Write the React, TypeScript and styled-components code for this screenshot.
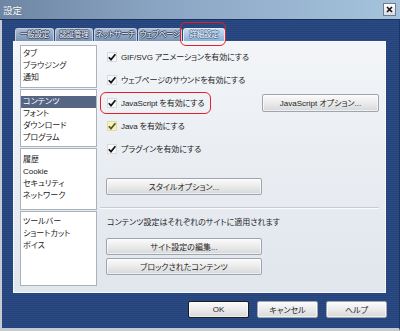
import React from 'react';
import styled, { createGlobalStyle, css } from 'styled-components';

const GlobalStyle = createGlobalStyle`
  html, body {
    margin: 0;
    padding: 0;
  }
  body {
    width: 400px;
    height: 331px;
    overflow: hidden;
    background: #284880;
    font-family: "Liberation Sans", "Noto Sans CJK JP", sans-serif;
    font-size: 8px;
    font-feature-settings: "palt";
    color: #1e1e1e;
  }
`;

const Window = styled.div`
  width: 400px;
  height: 331px;
  display: flex;
  flex-direction: column;
`;

const TitleBar = styled.div`
  height: 19px;
  flex: none;
  display: flex;
  align-items: center;
  justify-content: space-between;
  padding: 0 4px 0 3px;
  border-bottom: 1px solid #1a2f58;
  background: linear-gradient(90deg, #6e86a4 0%, #8aa5c3 40%, #a6c3dd 100%);
`;

const Title = styled.span`
  color: #fff;
  font-size: 9.5px;
  text-shadow: 0 0 1px #3a4d68;
`;

const CloseBox = styled.div`
  width: 11px;
  height: 11px;
  display: flex;
  align-items: center;
  justify-content: center;
  border: 1px solid #6f7c8c;
  background: linear-gradient(#ffffff, #d8dde3);
`;

const Body = styled.div`
  flex: 1;
  display: flex;
  flex-direction: column;
  padding: 8px 13px 0 11px;
  border-left: 2px solid #c6cbd3;
  border-bottom: 3px solid #c6cbd3;
  border-right: 1px solid #1c3562;
  background: repeating-linear-gradient(180deg, #2b4b84 0, #2b4b84 1px, #25437a 1px, #25437a 2px);
`;

const TabStrip = styled.div`
  display: flex;
  gap: 1px;
  padding-left: 2px;
  height: 13px;
  position: relative;
  z-index: 1;
`;

const Tab = styled.div<{ $active?: boolean; $width: number }>`
  position: relative;
  box-sizing: border-box;
  width: ${({ $width }) => $width}px;
  height: 13px;
  border: 1px solid #c3cfdd;
  border-bottom: none;
  border-radius: 3px 3px 0 0;
  background: linear-gradient(#a9bbd1, #7b93b3);
  color: #fff;
  font-size: 7.5px;
  letter-spacing: -0.2px;
  line-height: 12px;
  text-align: center;
  white-space: nowrap;
  text-shadow: 1px 0 0 #2b3d5c, -1px 0 0 #2b3d5c, 0 1px 0 #2b3d5c, 0 -1px 0 #2b3d5c;

  ${({ $active }) =>
    $active &&
    css`
      background: linear-gradient(#c4dbf1, #8db2d8);
      border-color: #e6eef7;
      text-shadow: 1px 0 0 #4a6c96, -1px 0 0 #4a6c96, 0 1px 0 #4a6c96, 0 -1px 0 #4a6c96;

      &::after {
        content: '';
        position: absolute;
        left: -4px;
        right: -2px;
        top: -7px;
        bottom: -5px;
        border: 1.5px solid #e3202b;
        border-radius: 6px;
      }
    `}
`;

const Panel = styled.div`
  height: 252px;
  box-sizing: border-box;
  display: flex;
  padding: 3px 0 6px 6px;
  border: 1px solid #f7f8fa;
  background: linear-gradient(180deg, #f3f5f8 0%, #e9edf2 50%, #e1e6ed 100%);
`;

const SideList = styled.div`
  width: 77px;
  flex: none;
  display: flex;
  flex-direction: column;
  gap: 1px;
`;

const Group = styled.div<{ $height?: number; $top: number }>`
  box-sizing: border-box;
  ${({ $height }) => ($height ? `height: ${$height}px;` : 'flex: 1;')}
  padding-top: ${({ $top }) => $top}px;
  border: 1px solid #aab2bd;
  background: #fff;
`;

const ListItem = styled.div<{ $selected?: boolean }>`
  height: 12px;
  line-height: 12px;
  padding-left: 2px;
  white-space: nowrap;
  color: ${({ $selected }) => ($selected ? '#fff' : '#1a1a1a')};
  background: ${({ $selected }) => ($selected ? '#546683' : 'transparent')};
`;

const Content = styled.div`
  flex: 1;
  display: flex;
  flex-direction: column;
  padding: 0 6px 0 3px;
`;

const OptionRow = styled.div`
  height: 23px;
  display: flex;
  align-items: center;
  justify-content: space-between;
  padding-left: 7px;
`;

const CheckLabel = styled.label<{ $marked?: boolean }>`
  position: relative;
  display: inline-flex;
  align-items: center;
  gap: 4px;
  height: 12px;
  white-space: nowrap;
  letter-spacing: -0.1px;

  ${({ $marked }) =>
    $marked &&
    css`
      &::after {
        content: '';
        position: absolute;
        left: -7px;
        right: -7px;
        top: -5px;
        bottom: -5px;
        border: 1.5px solid #e3202b;
        border-radius: 6px;
      }
    `}
`;

const Button = styled.div<{ $width: number; $height?: number; $default?: boolean }>`
  box-sizing: border-box;
  width: ${({ $width }) => $width}px;
  height: ${({ $height }) => $height ?? 17}px;
  flex: none;
  display: flex;
  align-items: center;
  justify-content: center;
  border: 1px solid ${({ $default }) => ($default ? '#1c1c1c' : '#9ea5ae')};
  border-radius: 2px;
  background: linear-gradient(#fbfbfb, #e9e9e9 55%, #d6d7d9);
  box-shadow: inset 0 0 0 1px rgba(255, 255, 255, 0.6);
  color: #1e1e1e;
  white-space: nowrap;
`;

const Separator = styled.div`
  height: 1px;
  margin: 12px 0 0 0;
  background: #c7ccd4;
  box-shadow: 0 1px 0 #fafbfc;
`;

const Note = styled.div`
  height: 10px;
  line-height: 10px;
  margin: 10px 0 0 7px;
  white-space: nowrap;
`;

const Footer = styled.div`
  display: flex;
  justify-content: flex-end;
  gap: 8px;
  padding-top: 8px;
  margin-right: -1px;
`;

const Check = ({ warm }: { warm?: boolean }) => (
  <svg width="10" height="10" viewBox="0 0 10 10">
    <rect x="0.5" y="0.5" width="9" height="9" fill={warm ? '#f7f1c2' : '#f7f8f9'} stroke={warm ? '#e2dca8' : '#d7dbe0'} />
    <path d="M1.8 5.2 L4 7.6 L8.4 2.2" fill="none" stroke={warm ? '#5e5a1c' : '#161616'} strokeWidth="1.7" />
  </svg>
);

const tabs = [
  { label: '一般設定', width: 39 },
  { label: '認証管理', width: 38 },
  { label: 'ネットサーチ', width: 43 },
  { label: 'ウェブページ', width: 44 },
  { label: '詳細設定', width: 42, active: true },
];

const groups = [
  { height: 43, top: 2, items: ['タブ', 'ブラウジング', '通知'] },
  { height: 58, top: 6, items: ['コンテンツ', 'フォント', 'ダウンロード', 'プログラム'] },
  { height: 62, top: 5, items: ['履歴', 'Cookie', 'セキュリティ', 'ネットワーク'] },
  { top: 4, items: ['ツールバー', 'ショートカット', 'ボイス'] },
];

export default function App() {
  return (
    <>
      <GlobalStyle />
      <Window>
        <TitleBar>
          <Title>設定</Title>
          <CloseBox>
            <svg width="7" height="7" viewBox="0 0 7 7">
              <path d="M1 1 L6 6 M6 1 L1 6" stroke="#111" strokeWidth="1.6" />
            </svg>
          </CloseBox>
        </TitleBar>
        <Body>
          <TabStrip>
            {tabs.map(({ label, width, active }) => (
              <Tab key={label} $width={width} $active={active}>
                {label}
              </Tab>
            ))}
          </TabStrip>
          <Panel>
            <SideList>
              {groups.map((g, i) => (
                <Group key={i} $height={g.height} $top={g.top}>
                  {g.items.map((item) => (
                    <ListItem key={item} $selected={item === 'コンテンツ'}>
                      {item}
                    </ListItem>
                  ))}
                </Group>
              ))}
            </SideList>
            <Content>
              <OptionRow>
                <CheckLabel>
                  <Check />
                  GIF/SVG アニメーションを有効にする
                </CheckLabel>
              </OptionRow>
              <OptionRow>
                <CheckLabel>
                  <Check />
                  ウェブページのサウンドを有効にする
                </CheckLabel>
              </OptionRow>
              <OptionRow>
                <CheckLabel $marked>
                  <Check />
                  JavaScript を有効にする
                </CheckLabel>
                <Button $width={117} $height={18}>
                  JavaScript オプション...
                </Button>
              </OptionRow>
              <OptionRow>
                <CheckLabel>
                  <Check warm />
                  Java を有効にする
                </CheckLabel>
              </OptionRow>
              <OptionRow>
                <CheckLabel>
                  <Check />
                  プラグインを有効にする
                </CheckLabel>
              </OptionRow>
              <Button $width={156} style={{ margin: '18px 0 0 6px' }}>
                スタイルオプション...
              </Button>
              <Separator />
              <Note>コンテンツ設定はそれぞれのサイトに適用されます</Note>
              <Button $width={156} style={{ margin: '10px 0 0 6px' }}>
                サイト設定の編集...
              </Button>
              <Button $width={156} style={{ margin: '3px 0 0 6px' }}>
                ブロックされたコンテンツ
              </Button>
            </Content>
          </Panel>
          <Footer>
            <Button $width={61} $default>
              OK
            </Button>
            <Button $width={61}>キャンセル</Button>
            <Button $width={61}>ヘルプ</Button>
          </Footer>
        </Body>
      </Window>
    </>
  );
}
